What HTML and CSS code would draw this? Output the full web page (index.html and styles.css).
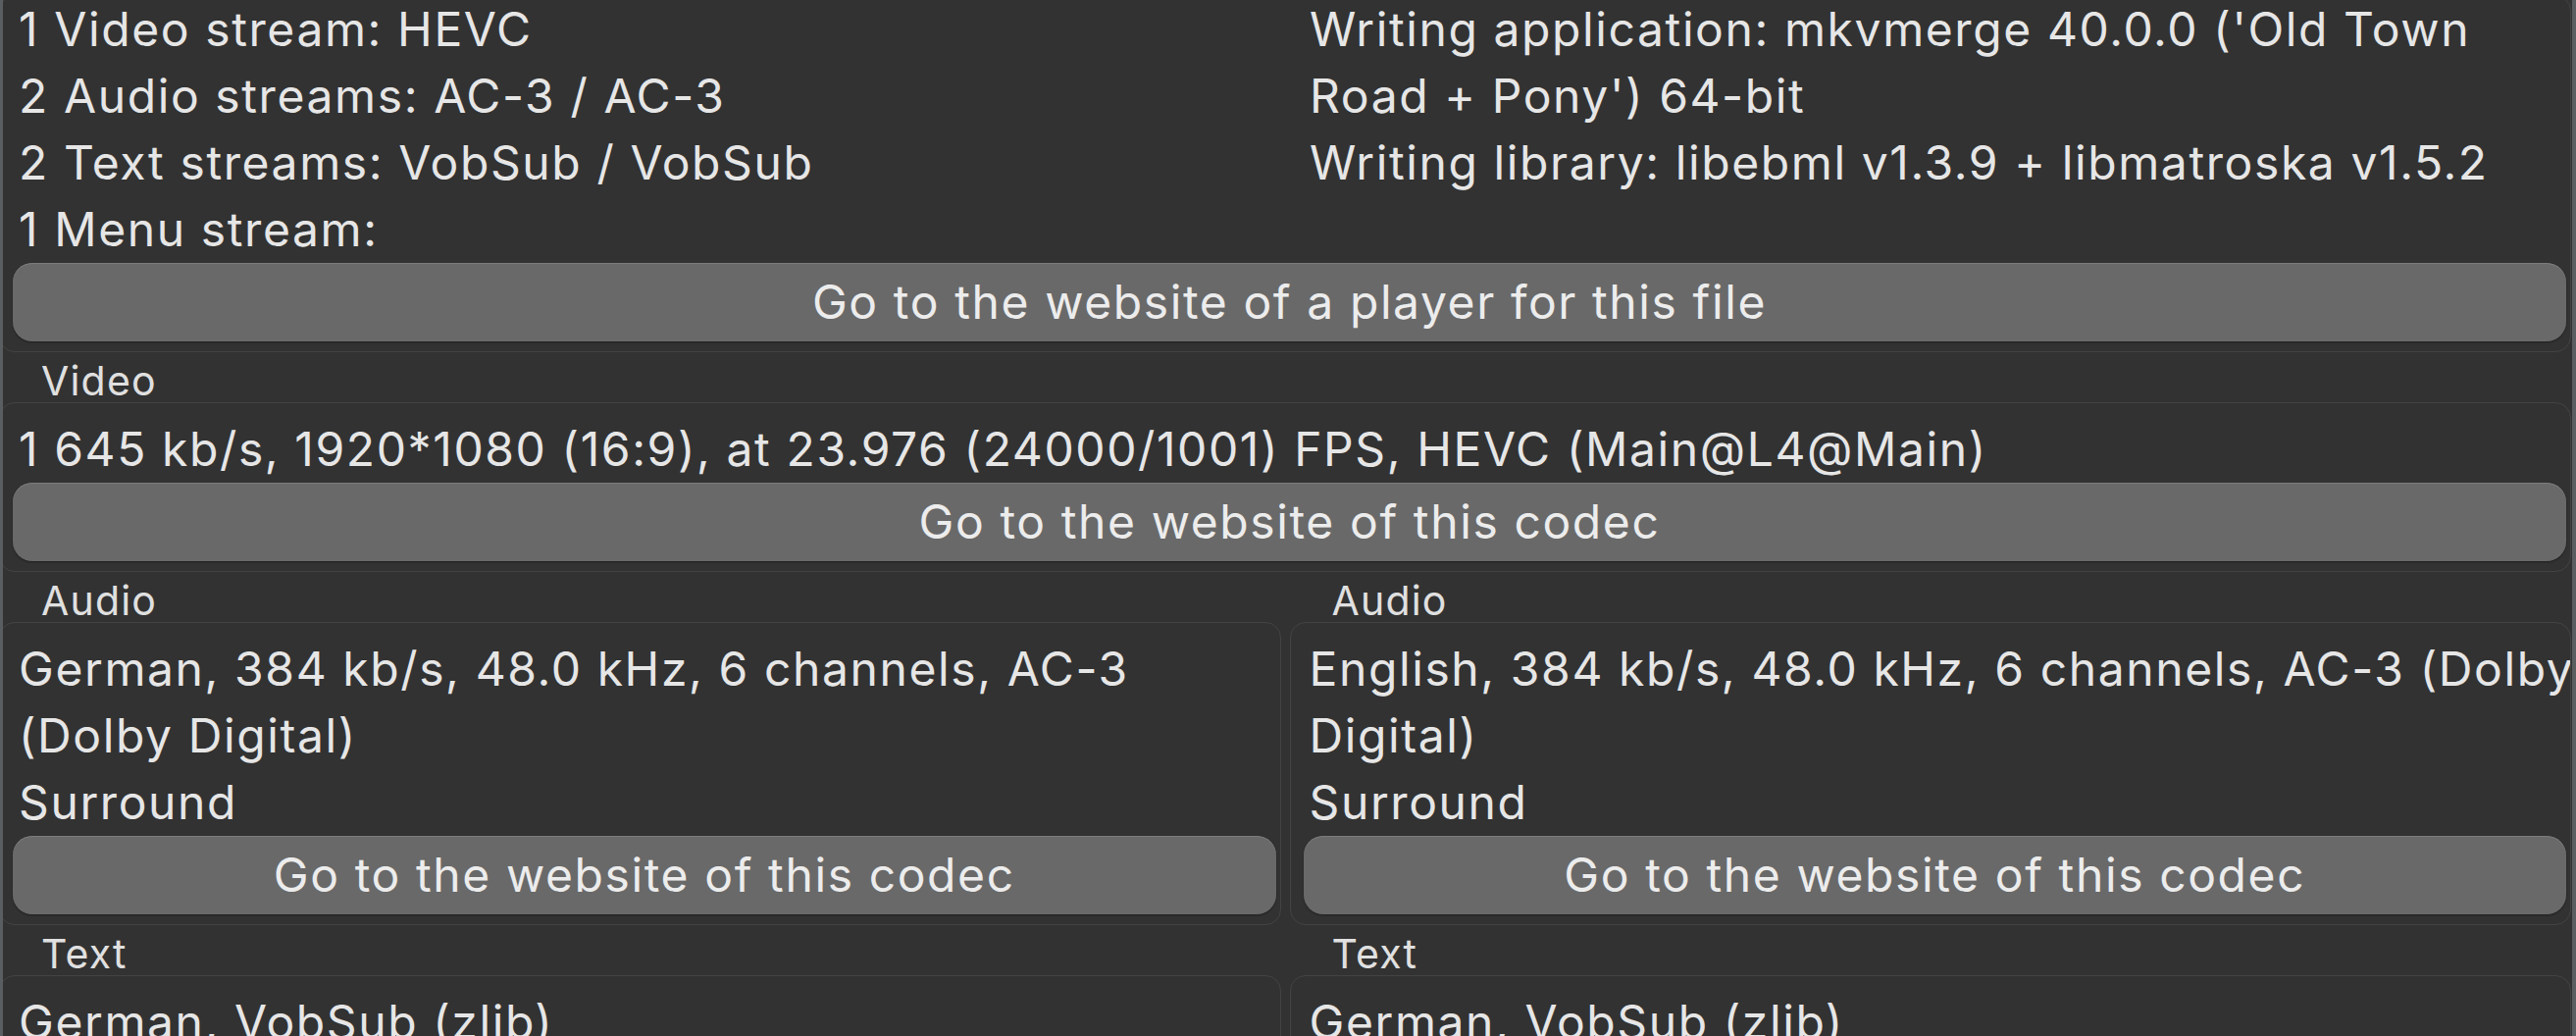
FILE: index.html
```html
<!DOCTYPE html>
<html lang="en">
<head>
  <meta charset="UTF-8">
  <meta name="viewport" content="width=device-width, initial-scale=1.0">
  <title>MediaInfo - Easy view</title>
  <link rel="stylesheet" href="styles.css">
</head>
<body>
  <div class="window">
    <section class="group general">
      <div class="info">
        <div class="col">
          <p>1 Video stream: HEVC</p>
          <p>2 Audio streams: AC-3 / AC-3</p>
          <p>2 Text streams: VobSub / VobSub</p>
          <p>1 Menu stream:</p>
        </div>
        <div class="col">
          <p>Writing application: mkvmerge 40.0.0 ('Old Town<br>Road + Pony') 64-bit</p>
          <p>Writing library: libebml v1.3.9 + libmatroska v1.5.2</p>
        </div>
      </div>
      <button class="link-btn">Go to the website of a player for this file</button>
    </section>

    <h2 class="group-title">Video</h2>
    <section class="group">
      <p>1 645 kb/s, 1920*1080 (16:9), at 23.976 (24000/1001) FPS, HEVC (Main@L4@Main)</p>
      <button class="link-btn">Go to the website of this codec</button>
    </section>

    <div class="pair">
      <div class="stream">
        <h2 class="group-title">Audio</h2>
        <section class="group">
          <p>German, 384 kb/s, 48.0 kHz, 6 channels, AC-3</p>
          <p>(Dolby Digital)</p>
          <p>Surround</p>
          <button class="link-btn">Go to the website of this codec</button>
        </section>
      </div>
      <div class="stream">
        <h2 class="group-title">Audio</h2>
        <section class="group">
          <p>English, 384 kb/s, 48.0 kHz, 6 channels, AC-3 (Dolby</p>
          <p>Digital)</p>
          <p>Surround</p>
          <button class="link-btn">Go to the website of this codec</button>
        </section>
      </div>
    </div>

    <div class="pair">
      <div class="stream">
        <h2 class="group-title">Text</h2>
        <section class="group">
          <p>German, VobSub (zlib)</p>
        </section>
      </div>
      <div class="stream">
        <h2 class="group-title">Text</h2>
        <section class="group">
          <p>German, VobSub (zlib)</p>
        </section>
      </div>
    </div>
  </div>
</body>
</html>
```

FILE: styles.css
```css
* {
  margin: 0;
  padding: 0;
  box-sizing: border-box;
}

html, body {
  height: 100%;
}

body {
  font-family: Inter, "Liberation Sans", sans-serif;
  font-size: 48px;
  letter-spacing: 1.6px;
  color: #e6e6e6;
  background: #323232;
  overflow: hidden;
}

/* window frame edges */
body::before,
body::after {
  content: "";
  position: fixed;
  top: 0;
  bottom: 0;
  background: #5a5e60;
  z-index: 5;
}

body::before {
  left: 0;
  width: 3px;
}

body::after {
  right: 0;
  width: 4px;
}

.window {
  width: 2622px;
  margin: -5px 0 0 -1px;
}

.group {
  border: 1px solid #434343;
  border-radius: 16px;
  padding: 13px 4px 10px 13px;
  overflow: hidden;
  white-space: nowrap;
}

.general {
  padding-top: 0;
}

.group p {
  line-height: 68px;
  padding-left: 6px;
}

.info {
  display: grid;
  grid-template-columns: 1316px 1fr;
}

.group-title {
  font-size: 41px;
  font-weight: 400;
  letter-spacing: 1.2px;
  line-height: 44px;
  padding: 7px 0 0 43px;
  color: #e0e0e0;
}

.pair {
  display: grid;
  grid-template-columns: 1fr 1fr;
  column-gap: 9px;
}

.stream {
  min-width: 0;
}

.link-btn {
  display: block;
  width: 100%;
  height: 80px;
  border: none;
  border-radius: 20px;
  background: #696969;
  box-shadow: inset 0 1px 0 #7c7c7c, 0 1px 2px rgba(0, 0, 0, 0.4);
  font-family: inherit;
  font-size: 48px;
  letter-spacing: 1.6px;
  line-height: 80px;
  color: #ececec;
  text-align: center;
}
```
